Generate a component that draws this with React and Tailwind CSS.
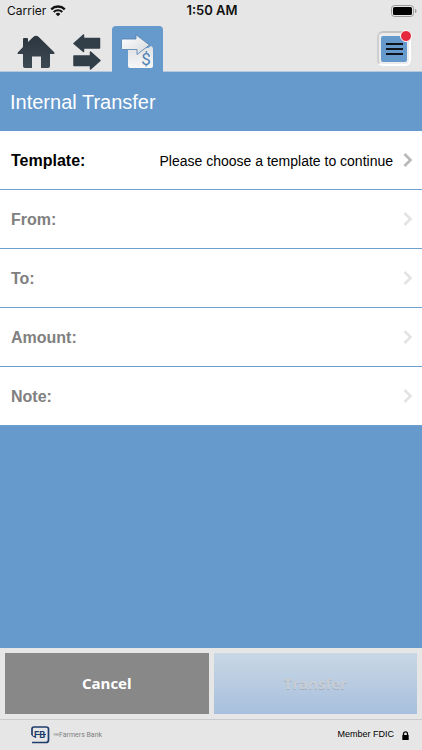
import React from "react";

const rows = [
    { label: "Template:", value: "Please choose a template to continue", enabled: true },
    { label: "From:", value: "", enabled: false },
    { label: "To:", value: "", enabled: false },
    { label: "Amount:", value: "", enabled: false },
    { label: "Note:", value: "", enabled: false },
]

function WifiIcon() {
    return (
        <svg width="16" height="12" viewBox="0 0 16 12" aria-hidden="true">
            <path d="M1.2 4.3a9.8 9.8 0 0 1 13.6 0" fill="none" stroke="#111" strokeWidth="2.4" />
            <path d="M3.7 7a6.2 6.2 0 0 1 8.6 0" fill="none" stroke="#111" strokeWidth="2" />
            <path d="M8 11.3L5.6 8.9a3.4 3.4 0 0 1 4.8 0z" fill="#111" />
        </svg>
    )
}

function BatteryIcon() {
    return (
        <svg width="26" height="12" viewBox="0 0 26 12" aria-hidden="true">
            <rect x="0.5" y="0.5" width="22" height="11" rx="3" fill="none" stroke="#999" />
            <rect x="2" y="2" width="19" height="8" rx="1.6" fill="#000" />
            <path d="M24 4v4c1-.3 1.5-1 1.5-2S25 4.3 24 4z" fill="#999" />
        </svg>
    )
}

function StatusBar() {
    return (
        <div className="grid h-[22px] grid-cols-3 items-center pl-[7px] pr-[5px] text-[#111]">
            <div className="flex items-center gap-1 text-xs">
                <span>Carrier</span>
                <WifiIcon />
            </div>
            <div className="text-center text-[13px] font-semibold">1:50 AM</div>
            <div className="flex justify-end">
                <BatteryIcon />
            </div>
        </div>
    )
}

function HomeIcon() {
    return (
        <svg width="38" height="34" viewBox="0 0 38 34" aria-hidden="true">
            <defs>
                <linearGradient id="homeFill" x1="0" y1="0" x2="0" y2="1">
                    <stop offset="0" stopColor="#2b363f" />
                    <stop offset="1" stopColor="#3d4953" />
                </linearGradient>
            </defs>
            <path
                d="M6 4Q6 3 7 3H10Q11 3 11 4V7L16.5 1.8Q19 -.3 21.5 1.8L37 17Q38.4 19 36.5 19H33V31Q33 33 31 33H24V21.5H15V33H8Q6 33 6 31V19H1.5Q-.3 19 1 17.2L6 12Z"
                fill="url(#homeFill)"
            />
        </svg>
    )
}

function SwapIcon() {
    return (
        <svg width="28" height="36" viewBox="0 0 28 36" fill="#323e48" stroke="#323e48" strokeWidth="1.5" strokeLinejoin="round" aria-hidden="true">
            <path d="M1 9.5L10.5 1V4.5H26.5V14H10.5V17.5Z" />
            <path d="M27 26.5L17.5 18V22H1V31.5H17.5V35Z" />
        </svg>
    )
}

function TransferIcon() {
    return (
        <svg width="33" height="36" viewBox="0 0 33 36" aria-hidden="true">
            <defs>
                <linearGradient id="arrowFill" x1="0" y1="0" x2="1" y2="1">
                    <stop offset="0" stopColor="#fff" />
                    <stop offset="1" stopColor="#d4d8dc" />
                </linearGradient>
                <linearGradient id="paperFill" x1="0" y1="0" x2="0" y2="1">
                    <stop offset="0" stopColor="#dde0e4" />
                    <stop offset="1" stopColor="#f8f8f8" />
                </linearGradient>
            </defs>
            <path d="M7 14H27L30 12Q32 12.5 32 15V32Q32 34 30 34H9Q7 34 7 32Z" fill="url(#paperFill)" />
            <path
                d="M1 5H15V.8L28.5 11L16 20.5V15.5H1Q.5 15.5 .5 14.5V6Z"
                fill="url(#arrowFill)"
                stroke="#4f7fae"
                strokeWidth="0.8"
                strokeLinejoin="round"
            />
            <text x="25" y="31" textAnchor="middle" fontSize="17" fill="#4f82b4" className="font-['Roboto',sans-serif]">$</text>
        </svg>
    )
}

function TopNav() {
    return (
        <nav className="flex h-[50px] items-end border-b border-[#b5c9de] pl-[17px] pr-[11px]">
            <button type="button" aria-label="Home" className="mb-[2px]">
                <HomeIcon />
            </button>
            <button type="button" aria-label="Transfers" className="ml-[18px] mb-px">
                <SwapIcon />
            </button>
            <button
                type="button"
                aria-label="Internal transfer"
                className="-mb-px ml-[11px] flex h-[46px] w-[51px] items-end justify-center rounded-t-[4px] bg-[#6699cc] pb-[2px]"
            >
                <TransferIcon />
            </button>
            <button
                type="button"
                aria-label="Menu"
                className="relative mb-[5px] ml-auto flex h-[35px] w-[34px] items-center justify-center rounded-md border-2 border-t-[#c4c4c4] border-r-white border-b-white border-l-[#cfcfcf] bg-[#ececec]"
            >
                <span className="flex h-[26px] w-[26px] flex-col items-center justify-center gap-[3px] rounded-[2px] bg-[#6699cc]">
                    <span className="h-[2px] w-[17px] bg-[#10151b]"></span>
                    <span className="h-[2px] w-[17px] bg-[#10151b]"></span>
                    <span className="h-[2px] w-[17px] bg-[#10151b]"></span>
                </span>
                <span className="absolute -top-[3px] -right-[3px] h-3 w-3 rounded-full border border-white bg-[#e5283d]"></span>
            </button>
        </nav>
    )
}

function Chevron({ enabled }) {
    return (
        <svg width="10" height="14" viewBox="0 0 10 14" className={enabled ? "text-[#b8b8b8]" : "text-[#e3e3e3]"} aria-hidden="true">
            <path d="M1.5 1L7.5 7L1.5 13" fill="none" stroke="currentColor" strokeWidth="2.6" />
        </svg>
    )
}

function FieldRow({ label, value, enabled }) {
    return (
        <button
            type="button"
            disabled={!enabled}
            className="flex h-[59px] w-full items-center border-b border-[#6f9fce] bg-white pl-[11px] pr-[9px] font-['Liberation_Sans',Arial,sans-serif]"
        >
            <span className={enabled ? "pt-[2px] text-base font-bold text-black" : "pt-[2px] text-base font-bold text-[#808080]"}>{label}</span>
            <span className="ml-auto mr-[10px] pt-[2px] text-sm text-black">{value}</span>
            <Chevron enabled={enabled} />
        </button>
    )
}

function BankLogo() {
    return (
        <svg width="19" height="18" viewBox="0 0 19 18" aria-hidden="true">
            <path d="M1 9V3Q1 1 3 1H15Q17.5 1 17.5 3V14Q17.5 16.5 15 16.5H1" fill="none" stroke="#1f3c6e" strokeWidth="1.7" />
            <path d="M1 8.5Q1 10.5 3 10.5H4.5M4 8.5H15" fill="none" stroke="#1f3c6e" strokeWidth="1" />
            <text x="3" y="12" fontSize="9" fontWeight="700" fill="#1f3c6e" className="font-['Inter',sans-serif]">FB</text>
        </svg>
    )
}

function LockIcon() {
    return (
        <svg width="7" height="9" viewBox="0 0 7 9" aria-hidden="true">
            <path d="M1.5 4V2.8a2 2 0 0 1 4 0V4" fill="none" stroke="#000" strokeWidth="1.3" />
            <rect x="0.3" y="4" width="6.4" height="5" rx="0.6" fill="#000" />
        </svg>
    )
}

function App() {
    return (
        <div className="flex min-h-screen flex-col bg-[#e6e6e6] font-['Inter',sans-serif]">
            <StatusBar />
            <TopNav />
            <main className="flex flex-1 flex-col bg-[#6699cc]">
                <h1 className="flex h-[59px] items-center pl-[10px] font-['Liberation_Sans',Arial,sans-serif] text-xl text-white">
                    Internal Transfer
                </h1>
                {rows.map((row) => (
                    <FieldRow key={row.label} label={row.label} value={row.value} enabled={row.enabled} />
                ))}
            </main>
            <div className="grid h-[72px] grid-cols-2 gap-[5px] border-b border-[#c9cbce] p-[5px] font-['Open_Sans',sans-serif] text-[15px] font-bold">
                <button type="button" className="bg-[#888888] text-white">Cancel</button>
                <button type="button" disabled className="bg-linear-to-b from-[#c9d7e5] to-[#a7c0dd] text-[#c9ced5] text-shadow-2xs">Transfer</button>
            </div>
            <footer className="flex h-[30px] items-center justify-between pl-[31px] pr-[13px] font-['Liberation_Sans',Arial,sans-serif]">
                <div className="flex items-center gap-[3px]">
                    <BankLogo />
                    <div className="flex items-center text-[#808080]">
                        <span className="text-[3px]">THE</span>
                        <span className="font-['Roboto',sans-serif] text-[7px]">Farmers Bank</span>
                    </div>
                </div>
                <div className="flex items-center gap-2 text-[9px] text-black">
                    <span>Member FDIC</span>
                    <LockIcon />
                </div>
            </footer>
        </div>
    )
}

export default App
